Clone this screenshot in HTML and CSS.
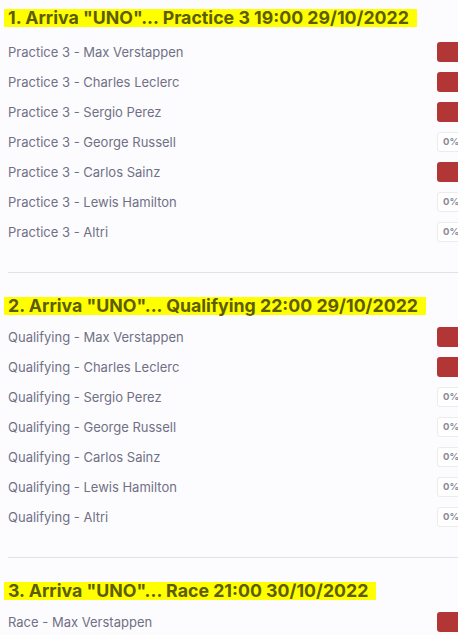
FILE: index.html
```html
<!DOCTYPE html>
<html>
<head>
<meta charset="utf-8">
<link rel="stylesheet" href="styles.css">
</head>
<body>
<div class="page">
  <section class="group">
    <h2 class="title"><span class="hl">1. Arriva "UNO"... Practice 3 19:00 29/10/2022</span></h2>
    <div class="row"><span class="label">Practice 3 - Max Verstappen</span><span class="bar fill"></span></div>
    <div class="row"><span class="label">Practice 3 - Charles Leclerc</span><span class="bar fill"></span></div>
    <div class="row"><span class="label">Practice 3 - Sergio Perez</span><span class="bar fill"></span></div>
    <div class="row"><span class="label">Practice 3 - George Russell</span><span class="bar zero">0%</span></div>
    <div class="row"><span class="label">Practice 3 - Carlos Sainz</span><span class="bar fill"></span></div>
    <div class="row"><span class="label">Practice 3 - Lewis Hamilton</span><span class="bar zero">0%</span></div>
    <div class="row"><span class="label">Practice 3 - Altri</span><span class="bar zero">0%</span></div>
  </section>
  <hr class="sep">
  <section class="group">
    <h2 class="title"><span class="hl">2. Arriva "UNO"... Qualifying 22:00 29/10/2022</span></h2>
    <div class="row"><span class="label">Qualifying - Max Verstappen</span><span class="bar fill"></span></div>
    <div class="row"><span class="label">Qualifying - Charles Leclerc</span><span class="bar fill"></span></div>
    <div class="row"><span class="label">Qualifying - Sergio Perez</span><span class="bar zero">0%</span></div>
    <div class="row"><span class="label">Qualifying - George Russell</span><span class="bar zero">0%</span></div>
    <div class="row"><span class="label">Qualifying - Carlos Sainz</span><span class="bar zero">0%</span></div>
    <div class="row"><span class="label">Qualifying - Lewis Hamilton</span><span class="bar zero">0%</span></div>
    <div class="row"><span class="label">Qualifying - Altri</span><span class="bar zero">0%</span></div>
  </section>
  <hr class="sep">
  <section class="group">
    <h2 class="title"><span class="hl">3. Arriva "UNO"... Race 21:00 30/10/2022</span></h2>
    <div class="row"><span class="label">Race - Max Verstappen</span><span class="bar fill"></span></div>
  </section>
</div>
</body>
</html>
```
FILE: styles.css
```css
html {
  overflow: hidden;
  background: #fcfcfe;
}
body {
  margin: 0;
  padding: 0 0 0 8px;
  background: #fcfcfe;
  font-family: Inter, "Noto Sans", sans-serif;
}
.page {
  width: 520px;
}
.group {
  display: flex;
  flex-direction: column;
}
.title {
  margin: 9px 0 10px 0;
  font-size: 17.75px;
  font-weight: 700;
  line-height: 18px;
  color: #5c5c00;
}
.hl {
  display: inline-block;
  background: #ffff00;
  padding: 0 8px 0 4px;
  margin-left: -4px;
}
.row {
  display: flex;
  align-items: center;
  height: 30px;
}
.label {
  width: 429px;
  font-size: 13px;
  color: #707085;
}
.bar {
  width: 70px;
  height: 20px;
  box-sizing: border-box;
  border-radius: 3px;
}
.fill {
  background: #b33636;
}
.zero {
  background: #ffffff;
  border: 1px solid #ececf0;
  font-size: 9.5px;
  font-weight: 700;
  color: #8a8a96;
  line-height: 18px;
  padding-left: 5px;
}
.sep {
  border: 0;
  border-top: 1px solid #e1e1e6;
  margin: 25px 0 0 0;
  height: 0;
}
.sep + .group .title {
  margin-top: 24px;
  margin-bottom: 7px;
}
```
